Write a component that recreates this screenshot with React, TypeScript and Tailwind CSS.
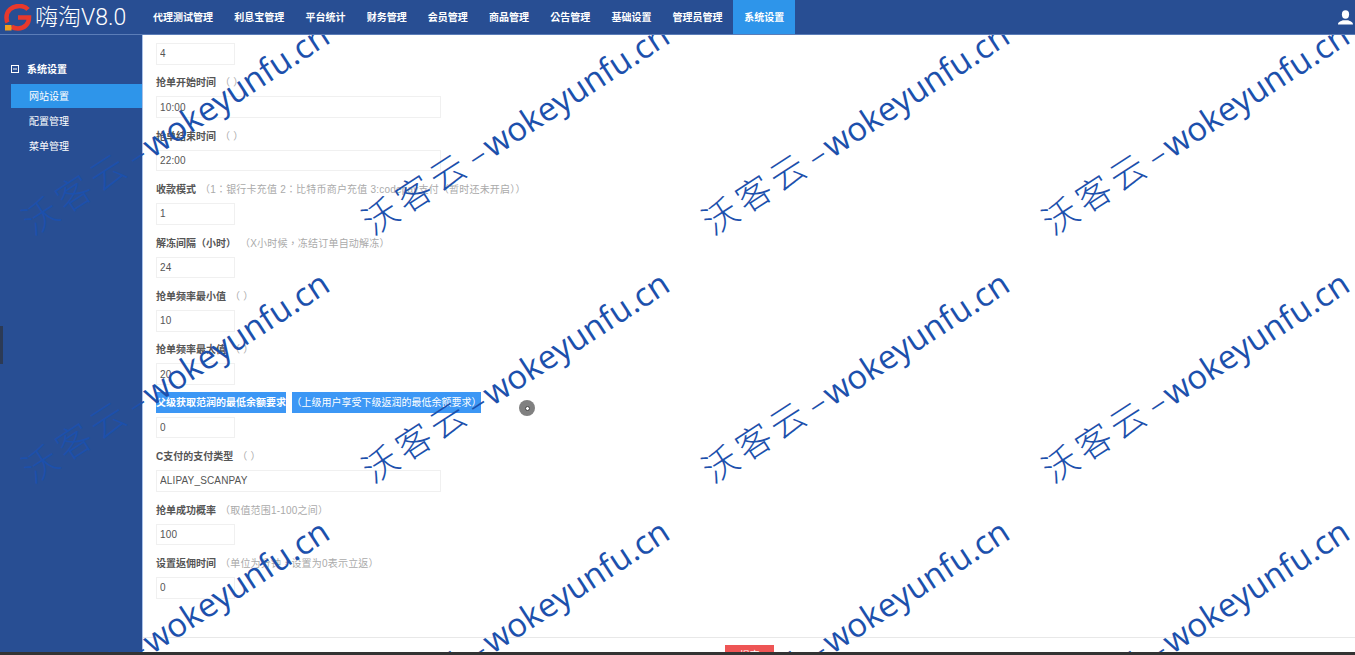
const navItems = ['代理测试管理', '利息宝管理', '平台统计', '财务管理', '会员管理', '商品管理', '公告管理', '基础设置', '管理员管理']

const fields = [
  { label: '', value: '4' },
  { label: '抢单开始时间', hint: '（ ）', value: '10:00', wide: true },
  { label: '抢单结束时间', hint: '（ ）', value: '22:00', wide: true },
  { label: '收款模式', hint: '（1：银行卡充值 2：比特币商户充值 3:codepay支付（暂时还未开启））', value: '1' },
  { label: '解冻间隔（小时）', hint: '（X小时候，冻结订单自动解冻）', value: '24' },
  { label: '抢单频率最小值', hint: '（ ）', value: '10' },
  { label: '抢单频率最大值', hint: '（ ）', value: '20' },
  { label: '父级获取范润的最低余额要求', hint: '（上级用户享受下级返润的最低余额要求）', value: '0', highlight: true },
  { label: 'C支付的支付类型', hint: '（ ）', value: 'ALIPAY_SCANPAY', wide: true },
  { label: '抢单成功概率', hint: '（取值范围1-100之间）', value: '100' },
  { label: '设置返佣时间', hint: '（单位为分钟，设置为0表示立返）', value: '0' },
]

function Logo() {
  return (
    <svg width="28" height="27" viewBox="0 0 28 27" className="mr-[3px] shrink-0">
      <path d="M24 5.500C22 3 19 2 15.500 2 8 2 2.500 6.500 2.500 13.500c0 1.800.3 3.500 1 5" fill="none" stroke="#e8392c" strokeWidth="4.500" />
      <path d="M14 13.500h11c0 6.500-4.500 11-11 11-2.500 0-4.800-.6-6.500-1.800" fill="none" stroke="#e8392c" strokeWidth="4.500" />
      <rect x="1" y="21" width="6.500" height="5.500" fill="#f2a11d" />
    </svg>
  )
}

function Watermarks() {
  return (
    <div className="pointer-events-none absolute left-[5px] top-[-31px] grid grid-cols-[repeat(4,340px)] grid-rows-[repeat(3,248px)]">
      {Array.from({ length: 12 }).map((_, i) => (
        <div key={i} className="flex items-center justify-center">
          <span className="flex -rotate-[33deg] items-baseline whitespace-nowrap font-['Open_Sans','Noto_Sans_CJK_TC',sans-serif] text-[33px] font-normal text-[#1c50ac]">
            <span className="text-[35px] font-light tracking-[5px]">沃客云</span>
            <span className="mx-[3px] font-light">–</span>
            <span>wokeyunfu.cn</span>
          </span>
        </div>
      ))}
    </div>
  )
}

export default function App() {
  return (
    <div className="flex h-[655px] w-[1355px] flex-col overflow-hidden bg-white font-['Liberation_Sans','Noto_Sans_CJK_TC',sans-serif] text-[10px] text-[#555]">
      <header className="flex h-[35px] shrink-0 border-b border-[#5b7db8] bg-[#284e93] text-white">
        <div className="flex w-[142.500px] shrink-0 items-center pl-[4px]">
          <Logo />
          <span className="font-['Roboto','Noto_Sans_CJK_SC',sans-serif] text-[23px] leading-none font-light whitespace-nowrap">嗨淘V8.0</span>
        </div>
        <nav className="flex">
          {navItems.map(item => (
            <a key={item} className="flex items-center px-[10.600px] font-bold">{item}</a>
          ))}
          <a className="flex items-center bg-[#2e95ea] px-[11px] font-bold">系统设置</a>
        </nav>
        <div className="ml-auto flex items-center pr-[2px]">
          <svg width="15" height="15" viewBox="0 0 15 15" fill="#fff">
            <ellipse cx="7.500" cy="4.500" rx="3.600" ry="4.200" />
            <path d="M0 14.500c0-2.500 2.800-3.300 5-4.200h5c2.200.9 5 1.700 5 4.200z" />
          </svg>
        </div>
      </header>

      <div className="relative flex min-h-0 flex-1 overflow-hidden">
        <aside className="relative w-[142.500px] shrink-0 border-r border-[#a9c1e8] bg-[#284e93] pt-[24px] pl-[11px] text-white">
          <div className="mb-[5px] flex h-[20px] items-center font-bold">
            <svg width="8" height="8" viewBox="0 0 8 8" className="mr-[8px]" fill="none" stroke="#fff">
              <rect x="0.500" y="0.500" width="7" height="7" />
              <path d="M2 4h4" />
            </svg>
            系统设置
          </div>
          <div className="flex h-[24px] items-center bg-[#2e95ea] pl-[18px]">网站设置</div>
          <div className="mt-[1px] flex h-[24px] items-center pl-[18px]">配置管理</div>
          <div className="mt-[1px] flex h-[24px] items-center pl-[18px]">菜单管理</div>
          <div className="absolute top-[291px] left-0 h-[38px] w-[3px] bg-[#2c3a55]" />
        </aside>

        <main className="flex min-w-0 flex-1 flex-col">
          <form className="min-h-0 flex-1 overflow-hidden pt-[8px] pl-[13.500px]">
            {fields.map((f, i) => (
              <div key={i} className="flex h-[53.400px] flex-col">
                {i > 0 && (
                  <div className="-mt-[32px] flex h-[32px] items-center pt-[5px]">
                    {f.highlight ? (
                      <div className="-mt-[2px] flex gap-[6px] text-white">
                        <span className="flex h-[21px] w-[130px] items-center overflow-hidden bg-[#3c97f5] font-bold whitespace-nowrap">{f.label}</span>
                        <span className="flex h-[21px] w-[189px] items-center justify-center bg-[#3c97f5] whitespace-nowrap">{f.hint}</span>
                      </div>
                    ) : (
                      <>
                        <span className="font-bold text-[#555] whitespace-nowrap">{f.label}</span>
                        <span className="ml-[4px] tracking-[0.2px] text-[#aaa] whitespace-nowrap">{f.hint}</span>
                      </>
                    )}
                  </div>
                )}
                <input
                  readOnly
                  value={f.value}
                  className={`${f.wide ? 'w-[285px]' : 'w-[79px]'} h-[21.600px] shrink-0 border border-[#f0f0f0] bg-white px-[3px] text-[10px] tracking-[0.15px] text-[#555] outline-none`}
                />
              </div>
            ))}
          </form>
          <div className="h-[15px] shrink-0 overflow-hidden border-t border-[#e8e8e8] pt-[7px]">
            <div className="flex justify-center">
              <button type="button" className="ml-[2px] h-[20px] w-[49px] bg-[#ee5555] text-[10px] text-white">提交</button>
            </div>
          </div>
        </main>

        <div className="absolute top-[365px] left-[519px] flex h-[16px] w-[16px] items-center justify-center rounded-full bg-[#808080]">
          <div className="h-[5px] w-[5px] rounded-full border border-[#444] bg-white" />
        </div>

        <Watermarks />
      </div>

      <div className="h-[3px] shrink-0 bg-[#333]" />
    </div>
  )
}
